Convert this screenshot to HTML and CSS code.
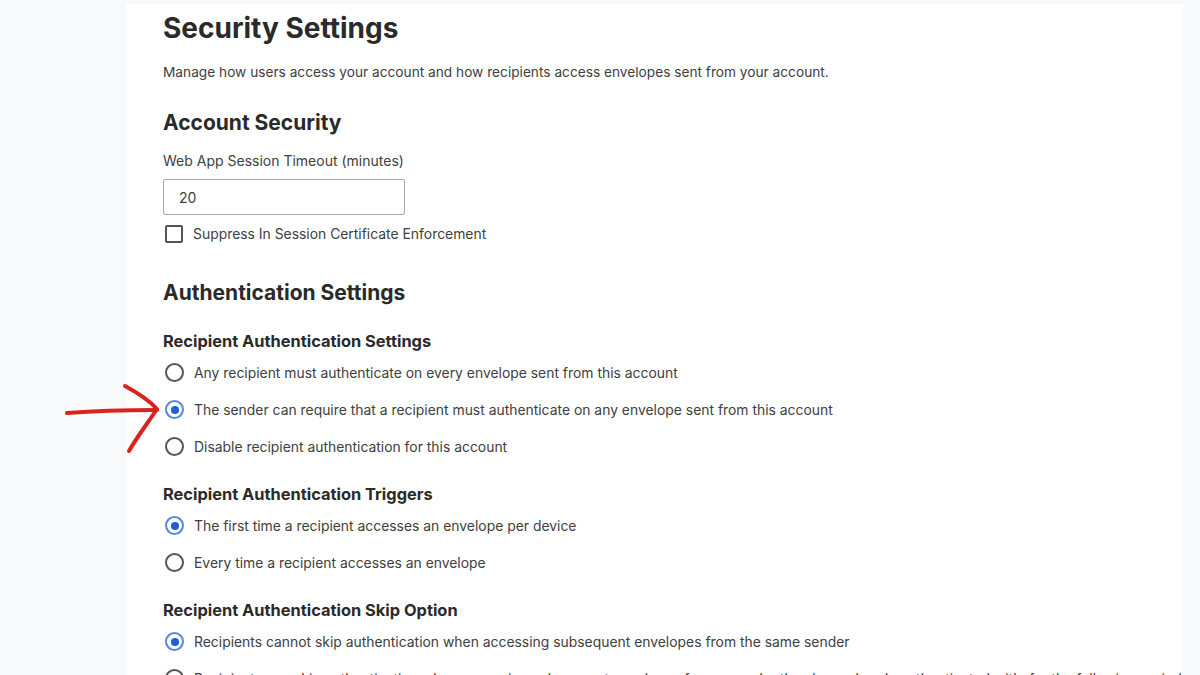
FILE: index.html
```html
<!DOCTYPE html>
<html lang="en">
<head>
    <meta charset="UTF-8">
    <meta name="viewport" content="width=device-width, initial-scale=1.0">
    <title>Security Settings</title>
    <link rel="stylesheet" href="styles.css">
</head>
<body>
    <div class="panel">
        <h1 class="title">Security Settings</h1>
        <p class="intro">Manage how users access your account and how recipients access envelopes sent from your account.</p>

        <h2 class="section-title">Account Security</h2>
        <label class="field-label" for="timeout">Web App Session Timeout (minutes)</label>
        <input class="text-input" id="timeout" type="text" value="20">
        <label class="check-row">
            <span class="checkbox"></span>
            <span>Suppress In Session Certificate Enforcement</span>
        </label>

        <h2 class="section-title auth">Authentication Settings</h2>

        <h3 class="group-title first">Recipient Authentication Settings</h3>
        <div class="radio-row"><span class="radio"></span>Any recipient must authenticate on every envelope sent from this account</div>
        <div class="radio-row"><span class="radio checked"></span>The sender can require that a recipient must authenticate on any envelope sent from this account</div>
        <div class="radio-row"><span class="radio"></span>Disable recipient authentication for this account</div>

        <h3 class="group-title">Recipient Authentication Triggers</h3>
        <div class="radio-row"><span class="radio checked"></span>The first time a recipient accesses an envelope per device</div>
        <div class="radio-row"><span class="radio"></span>Every time a recipient accesses an envelope</div>

        <h3 class="group-title">Recipient Authentication Skip Option</h3>
        <div class="radio-row"><span class="radio checked"></span>Recipients cannot skip authentication when accessing subsequent envelopes from the same sender</div>
        <div class="radio-row"><span class="radio"></span>Recipients can skip authentication when accessing subsequent envelopes from a sender they have already authenticated with, for the following period</div>
    </div>

    <svg class="annotation" width="180" height="80" viewBox="0 0 180 80">
        <path d="M4 33 C 30 31, 60 30, 94 30" fill="none" stroke="#d8231f" stroke-width="4" stroke-linecap="round"/>
        <path d="M62 6 C 75 13, 86 20, 94 29 C 84 44, 74 57, 66 71" fill="none" stroke="#d8231f" stroke-width="4" stroke-linecap="round" stroke-linejoin="round"/>
    </svg>
</body>
</html>
```

FILE: styles.css
```css
body {
    margin: 0;
    background: #f8f9fb;
    font-family: Inter, "Noto Sans", sans-serif;
    color: #404040;
    height: 675px;
    overflow: hidden;
    position: relative;
}
.panel {
    margin-left: 126px;
    margin-top: 4px;
    width: 1057px;
    min-height: 700px;
    box-sizing: border-box;
    padding: 6px 0 0 37px;
    background: #fff;
    white-space: nowrap;
    overflow: hidden;
}
.title {
    margin: 0;
    font-size: 28px;
    line-height: 36px;
    font-weight: 700;
    color: #2a2a2a;
}
.intro {
    margin: 16px 0 0;
    font-size: 13.7px;
    line-height: 20px;
}
.section-title {
    margin: 27px 0 0;
    font-size: 21px;
    line-height: 28px;
    font-weight: 700;
    color: #2a2a2a;
}
.section-title.auth {
    margin-top: 35px;
}
.field-label {
    display: block;
    margin-top: 14px;
    font-size: 14px;
    line-height: 20px;
}
.text-input {
    display: block;
    margin-top: 8px;
    width: 242px;
    height: 36px;
    box-sizing: border-box;
    border: 1px solid #a9a9a9;
    border-radius: 2px;
    padding: 0 15px;
    font-family: inherit;
    font-size: 14px;
    color: #404040;
}
.check-row {
    display: flex;
    align-items: center;
    gap: 10px;
    margin-top: 9px;
    height: 20px;
    padding-left: 2px;
    font-size: 13.9px;
}
.checkbox {
    width: 18px;
    height: 18px;
    box-sizing: border-box;
    border: 2px solid #555;
    border-radius: 2px;
}
.group-title {
    margin: 18px 0 2px;
    font-size: 16.4px;
    line-height: 22px;
    font-weight: 700;
    color: #2a2a2a;
}
.group-title.first {
    margin-top: 23px;
}
.radio-row {
    display: flex;
    align-items: center;
    gap: 10px;
    height: 37px;
    padding-left: 2px;
    font-size: 13.9px;
}
.radio {
    width: 19px;
    height: 19px;
    box-sizing: border-box;
    border: 2px solid #555;
    border-radius: 50%;
    position: relative;
    flex-shrink: 0;
}
.radio.checked {
    border-color: #5586e4;
}
.radio.checked::after {
    content: "";
    position: absolute;
    top: 3.5px;
    left: 3.5px;
    width: 8px;
    height: 8px;
    border-radius: 50%;
    background: #1c5fd6;
}
.annotation {
    position: absolute;
    left: 63px;
    top: 380px;
}
```
